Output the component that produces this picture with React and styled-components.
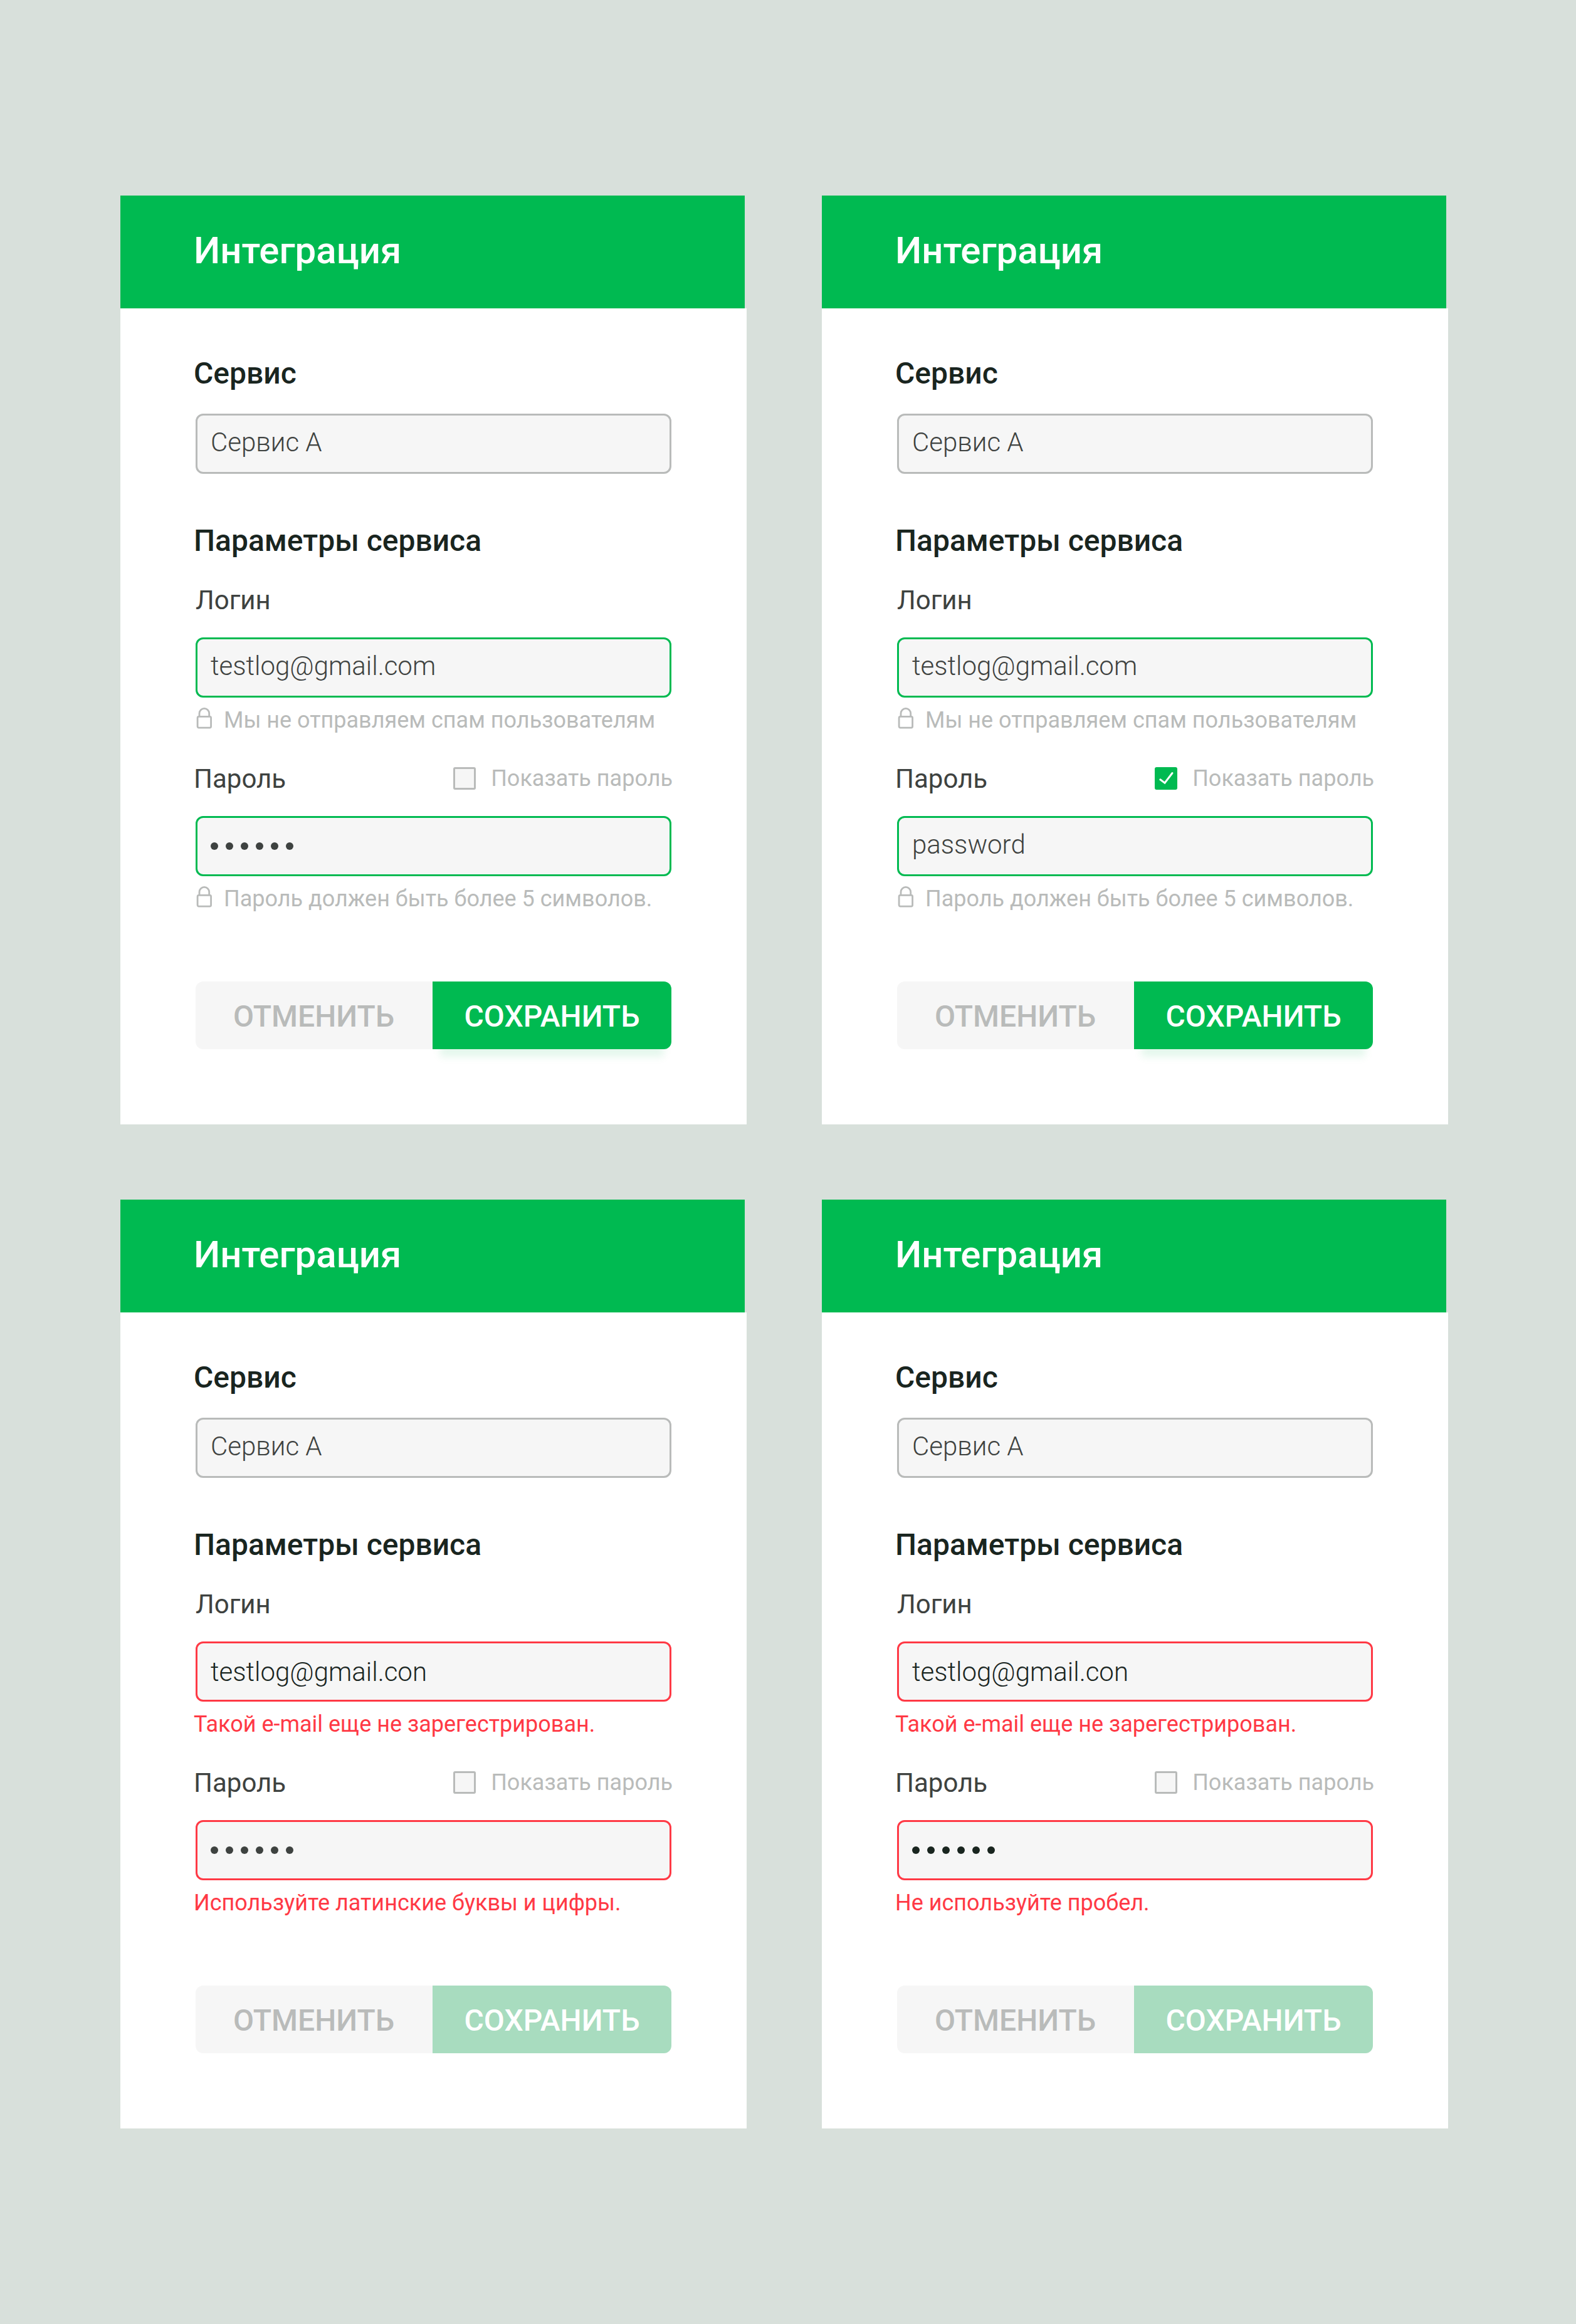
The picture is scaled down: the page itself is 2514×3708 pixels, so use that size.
import React from "react";
import styled, { createGlobalStyle, css } from "styled-components";

const GlobalStyle = createGlobalStyle`
  * {
    box-sizing: border-box;
  }

  body {
    margin: 0;
    background: #d8e0db;
    font-family: Roboto, "Noto Sans", sans-serif;
  }
`;

const Page = styled.main`
  min-height: 3708px;
  padding: 312px 192px 0;
  display: grid;
  grid-template-columns: 999px 999px;
  grid-auto-rows: 1482px;
  gap: 120px;
  align-content: start;
`;

const Card = styled.section`
  display: flex;
  flex-direction: column;
`;

const CardHeader = styled.header`
  width: 996px;
  height: 180px;
  padding: 52px 117px 0;
  background: #00ba51;
`;

const Title = styled.h1`
  margin: 0;
  font-size: 60px;
  font-weight: 500;
  line-height: 72px;
  color: #ffffff;
`;

const Form = styled.div`
  flex: 1;
  padding: 74px 120px 0;
  background: #ffffff;
`;

const SectionTitle = styled.h2`
  margin: 0 0 0 -3px;
  font-size: 48px;
  font-weight: 500;
  line-height: 60px;
  color: #19251f;
`;

const ParamsTitle = styled(SectionTitle)`
  margin-top: 77px;
`;

const LoginLabel = styled.label`
  display: block;
  margin-top: 41px;
  font-size: 42px;
  line-height: 48px;
  color: #3e4240;
`;

const PasswordLabel = styled(LoginLabel)`
  margin: 1px 0 0 -3px;
`;

const borders = {
  plain: "#b9bbba",
  valid: "#00ba51",
  error: "#ff3945",
};

const Field = styled.div`
  height: 96px;
  margin-top: ${(props) => props.$top}px;
  padding: ${(props) => (props.$low ? 22 : 19)}px 21px 0;
  border: 3px solid ${(props) => borders[props.$state]};
  border-radius: 12px;
  background: #f6f6f6;
  font-size: 42px;
  font-weight: 300;
  line-height: 48px;
  color: ${(props) => (props.$dark ? "#19251f" : "#3e4240")};
`;

const Dots = styled.div`
  display: flex;
  gap: 12px;
  margin-top: 20px;
`;

const Dot = styled.span`
  width: 12px;
  height: 12px;
  border-radius: 50%;
  background: currentColor;
`;

const Hint = styled.div`
  display: flex;
  height: 42px;
  margin-top: 15px;
  font-size: 36px;
  line-height: 42px;
  white-space: nowrap;
  color: #b9bbba;

  ${(props) =>
    props.$error &&
    css`
      margin-left: -3px;
      color: #ff3945;
    `}
`;

const LockIcon = styled.svg`
  width: 27px;
  height: 36px;
  margin-right: 18px;
`;

const PasswordRow = styled.div`
  display: flex;
  justify-content: space-between;
  height: 48px;
  margin-top: 48px;
`;

const ShowPassword = styled.div`
  display: flex;
  align-items: center;
  margin-right: -2px;
  font-size: 36px;
  line-height: 42px;
  white-space: nowrap;
  color: #b9bbba;
`;

const Checkbox = styled.span`
  display: flex;
  width: 36px;
  height: 36px;
  margin-right: 24px;
  border: 3px solid ${(props) => (props.$checked ? "#00ba51" : "#b9bbba")};
  border-radius: 3px;
  background: ${(props) => (props.$checked ? "#00ba51" : "#f6f6f6")};
`;

const Actions = styled.div`
  display: flex;
  height: 108px;
  margin-top: 111px;
`;

const Button = styled.button`
  width: 378px;
  padding: 4px 1px 0 0;
  border: none;
  border-radius: 12px 0 0 12px;
  background: #f6f6f6;
  font-family: inherit;
  font-size: 48px;
  font-weight: 500;
  line-height: 60px;
  color: #b9bbba;
`;

const SaveButton = styled(Button)`
  width: 381px;
  padding-right: 0;
  border-radius: 0 12px 12px 0;
  background: ${(props) => (props.$inactive ? "#a8dcbf" : "#00ba51")};
  box-shadow: ${(props) =>
    props.$inactive ? "none" : "0 24px 12px -12px rgba(0, 186, 81, 0.11)"};
  color: #ffffff;
`;

function Lock() {
  return (
    <LockIcon viewBox="0 0 27 36" fill="none" stroke="currentColor" strokeWidth="2.8">
      <rect x="3.1" y="15.4" width="21.5" height="17.7" rx="2" />
      <path d="M6 15.4V10.3A7.85 7.85 0 0 1 21.7 10.3V15.4" />
    </LockIcon>
  );
}

function Check() {
  return (
    <svg
      width="30"
      height="30"
      viewBox="0 0 30 30"
      fill="none"
      stroke="#ffffff"
      strokeWidth="3"
      strokeLinecap="round"
    >
      <path d="M5.8 16.8L13 22.2L25 6.5" />
    </svg>
  );
}

function Message({ error, children }) {
  return (
    <Hint $error={error}>
      {!error && <Lock />}
      {children}
    </Hint>
  );
}

function IntegrationCard({ login, loginHint, password, passwordHint, error, dark }) {
  const state = error ? "error" : "valid";

  return (
    <Card>
      <CardHeader>
        <Title>Интеграция</Title>
      </CardHeader>
      <Form>
        <SectionTitle>Сервис</SectionTitle>
        <Field $top={34} $state="plain">
          Сервис А
        </Field>
        <ParamsTitle>Параметры сервиса</ParamsTitle>
        <LoginLabel>Логин</LoginLabel>
        <Field $top={35} $state={state} $low={error} $dark={error}>
          {login}
        </Field>
        <Message error={error}>{loginHint}</Message>
        <PasswordRow>
          <PasswordLabel>Пароль</PasswordLabel>
          <ShowPassword>
            <Checkbox $checked={!!password}>{password && <Check />}</Checkbox>
            Показать пароль
          </ShowPassword>
        </PasswordRow>
        <Field $top={36} $state={state} $dark={dark}>
          {password || (
            <Dots>
              {[...Array(6)].map((_, i) => (
                <Dot key={i} />
              ))}
            </Dots>
          )}
        </Field>
        <Message error={error}>{passwordHint}</Message>
        <Actions>
          <Button>ОТМЕНИТЬ</Button>
          <SaveButton $inactive={error}>СОХРАНИТЬ</SaveButton>
        </Actions>
      </Form>
    </Card>
  );
}

const cards = [
  {
    login: "testlog@gmail.com",
    loginHint: "Мы не отправляем спам пользователям",
    passwordHint: "Пароль должен быть более 5 символов.",
  },
  {
    login: "testlog@gmail.com",
    loginHint: "Мы не отправляем спам пользователям",
    password: "password",
    passwordHint: "Пароль должен быть более 5 символов.",
  },
  {
    login: "testlog@gmail.con",
    loginHint: "Такой e-mail еще не зарегестрирован.",
    passwordHint: "Используйте латинские буквы и цифры.",
    error: true,
  },
  {
    login: "testlog@gmail.con",
    loginHint: "Такой e-mail еще не зарегестрирован.",
    passwordHint: "Не используйте пробел.",
    error: true,
    dark: true,
  },
];

export default function App() {
  return (
    <>
      <GlobalStyle />
      <Page>
        {cards.map((card, i) => (
          <IntegrationCard key={i} {...card} />
        ))}
      </Page>
    </>
  );
}
